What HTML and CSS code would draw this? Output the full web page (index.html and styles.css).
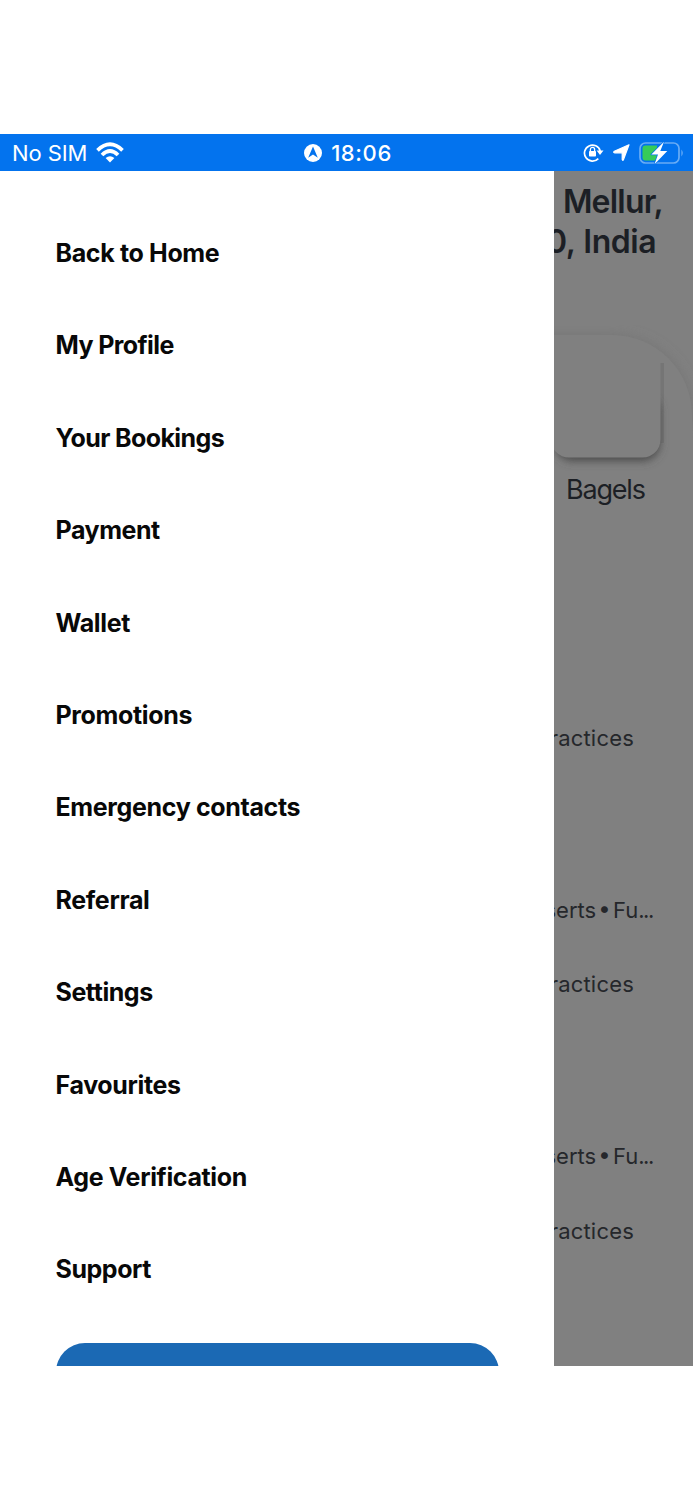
FILE: index.html
```html
<!DOCTYPE html>
<html lang="en">
<head>
<meta charset="utf-8">
<title>Menu</title>
<link rel="stylesheet" href="styles.css">
</head>
<body>
<div class="phone">
  <header class="status">
    <div class="carrier"><span>No SIM</span>
      <svg class="wifi" width="28" height="21" viewBox="0 0 28 21"><g fill="none" stroke="#fff" stroke-width="3.8"><path d="M1.5 8.300Q14-3.700 26.500 8.300"/><path d="M6 13Q14 5.200 22 13"/></g><path fill="#fff" d="M14 20.500 9.600 16.100Q14 12.500 18.400 16.100Z"/></svg>
    </div>
    <div class="clock">
      <svg width="18" height="18" viewBox="0 0 18 18"><circle cx="9" cy="9" r="9" fill="#fff"/><path d="M9 2.600 13.800 13.800 9 10.500 4.200 13.800Z" fill="#0373ee"/></svg>
      <span>18:06</span>
    </div>
    <div class="indicators">
      <svg width="21" height="19" viewBox="0 0 21 19"><path d="M15.300 15.600A8 8 0 1 1 17.200 8" fill="none" stroke="#fff" stroke-width="1.7"/><path d="M13.600 7.500H20.500L17 12Z" fill="#fff"/><rect x="6" y="8" width="7" height="5.600" rx=".8" fill="#fff"/><path d="M7.400 8.200V6.500a2.100 2.100 0 0 1 4.200 0v1.700" fill="none" stroke="#fff" stroke-width="1.3"/></svg>
      <svg width="17" height="17" viewBox="0 0 17 17"><path d="M16 .8 10.500 15.600Q9.700 17 9.200 15.600V8.800H1.500Q0 8.300 1.300 7.300Z" fill="#fff" stroke="#fff" stroke-width="1.2" stroke-linejoin="round"/></svg>
      <svg width="45" height="24" viewBox="0 0 45 24"><rect x="1" y="2" width="39" height="20" rx="5.5" fill="none" stroke="#69acf5" stroke-width="1.7"/><path d="M42.400 8.500q2.800 3.500 0 7Z" fill="#69acf5"/><path d="M6.500 4.500H18V19.500H6.500q-3 0-3-3v-9q0-3 3-3Z" fill="#36cb59"/><path d="M25 .8 12.300 13.600H19L15.500 23.200 28.300 9.900H21.300Z" fill="#fff" stroke="#0373ee" stroke-width="1.5" paint-order="stroke" stroke-linejoin="round"/></svg>
    </div>
  </header>
  <main class="screen">
    <nav class="drawer">
      <ul class="menu">
        <li>Back to Home</li>
        <li class="snug">My Profile</li>
        <li class="snug">Your Bookings</li>
        <li class="firm">Payment</li>
        <li>Wallet</li>
        <li>Promotions</li>
        <li>Emergency contacts</li>
        <li>Referral</li>
        <li class="firm">Settings</li>
        <li>Favourites</li>
        <li>Age Verification</li>
        <li class="firm">Support</li>
      </ul>
      <div class="button"></div>
    </nav>
    <section class="backdrop">
      <h1 class="address"><span class="town">Mellur,</span><span class="country">0, India</span></h1>
      <div class="categories">
        <svg class="tile" width="139" height="150" viewBox="0 0 139 150">
          <defs>
            <filter id="soft" x="-20%" y="-20%" width="140%" height="150%"><feGaussianBlur stdDeviation="4"/></filter>
            <filter id="wide" x="-20%" y="-20%" width="140%" height="140%"><feGaussianBlur stdDeviation="6"/></filter>
          </defs>
          <path d="M-20 10H58A80 80 0 0 1 138 90V100H-20Z" fill="#757575" filter="url(#wide)"/>
          <path d="M-20 10H58A80 80 0 0 1 138 90V150H-20Z" fill="#808080"/>
          <path d="M106 38h4v80h-4z" fill="#757575"/>
          <rect x="1" y="70" width="105" height="66" rx="18" fill="#4c4c4c" filter="url(#soft)"/>
          <path d="M-3 11H58Q88 12 106.500 38V114.500a18 18 0 0 1-18 18H15a18 18 0 0 1-18-18Z" fill="#808080"/>
        </svg>
        <p class="category">Bagels</p>
      </div>
      <div class="listing">
        <p class="practices">ractices</p>
        <p class="cuisine">serts • Fu<span class="dots">...</span></p>
        <p class="practices">ractices</p>
        <p class="cuisine">serts • Fu<span class="dots">...</span></p>
        <p class="practices">ractices</p>
      </div>
    </section>
  </main>
</div>
</body>
</html>
```
FILE: styles.css
```css
* { box-sizing: border-box; }
body { margin: 0; padding-top: 133.5px; height: 1500px; background: #fff; font-family: Inter, "Open Sans", sans-serif; overflow: hidden; }
.phone { height: 1232.5px; display: flex; flex-direction: column; overflow: hidden; }
.status { height: 37px; flex: none; background: #0373ee; color: #fff; display: grid; grid-template-columns: 1fr auto 1fr; align-items: center; padding: 1px 9px 0 12px; font-size: 22px; line-height: 36px; }
.carrier, .clock, .indicators { display: flex; align-items: center; }
.carrier { gap: 9px; letter-spacing: -.1px; }
.clock { gap: 9px; font-weight: 500; letter-spacing: .6px; }
.indicators { justify-content: flex-end; gap: 9px; }
.screen { flex: 1; display: flex; min-height: 0; }
.drawer { width: 554px; padding: 36.6px 55px 0 55.5px; overflow: hidden; }
.menu { list-style: none; margin: 0; padding: 0; }
.menu li { height: 92.4px; line-height: 93.4px; font-size: 25px; font-weight: 650; letter-spacing: -.35px; color: #080808; white-space: nowrap; }
.menu .firm { letter-spacing: -.45px; }
.menu .snug { letter-spacing: -.6px; }
.button { width: 443px; height: 58px; margin-top: 27.4px; border-radius: 29px; background: #1b69b4; }
.backdrop { flex: 1; min-width: 0; background: #808080; color: #1c1f25; overflow: hidden; }
.address { margin: 0; padding-top: 11px; height: 154px; font-size: 32px; line-height: 40px; font-weight: 600; white-space: nowrap; }
.address span { display: flex; justify-content: flex-end; white-space: pre; }
.address .town { padding-right: 30px; letter-spacing: -.8px; }
.address .country { padding-right: 37px; letter-spacing: -.5px; word-spacing: 1px; }
.categories { height: 222px; }
.tile { display: block; }
.category { margin: -5px 0 0; padding-left: 12px; font-size: 27px; line-height: 40px; letter-spacing: -1.2px; }
.listing { padding-top: 171px; font-size: 22px; line-height: 40px; }
.listing p { margin: 0; white-space: nowrap; color: #25272b; display: flex; justify-content: flex-end; }
.listing .practices { height: 172px; padding-right: 59px; letter-spacing: .2px; }
.listing .cuisine { height: 74.5px; padding-right: 40px; word-spacing: -4px; }
.dots { letter-spacing: -1.4px; }
```
